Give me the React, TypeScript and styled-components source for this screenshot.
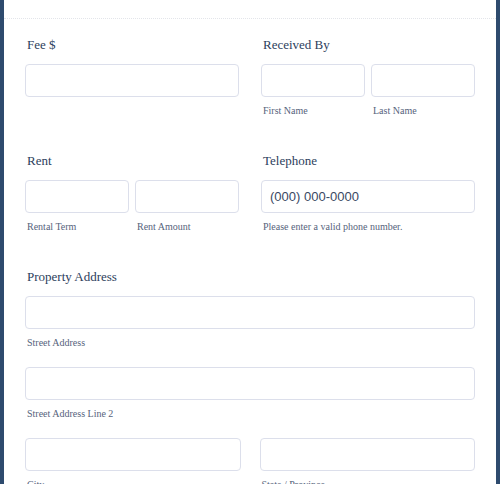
import React from "react";
import styled, { createGlobalStyle } from "styled-components";

const Global = createGlobalStyle`
  html, body { margin: 0; padding: 0; background: #2e4b6e; }
  body { font-family: "Liberation Serif", "Times New Roman", serif; }
  * { box-sizing: border-box; }
`;

const Page = styled.div`
  padding: 0 4px;
  height: 484px;
  overflow: hidden;
`;

const Card = styled.div`
  background: #ffffff;
  min-height: 520px;
`;

const Header = styled.div`
  height: 19px;
  border-bottom: 1px dotted #e3e5ea;
`;

const Body = styled.div`
  padding: 16px 21px 0 21px;
  display: flex;
  flex-direction: column;
  gap: 33px;
`;

const Row = styled.div<{ $gap?: number }>`
  display: grid;
  grid-template-columns: 1fr 1fr;
  column-gap: ${(p) => p.$gap ?? 22}px;
`;

const Field = styled.div`
  display: flex;
  flex-direction: column;
`;

const Label = styled.div`
  font-size: 13px;
  line-height: 20px;
  color: #2c3e5c;
  padding-left: 2px;
  margin-bottom: 9px;
`;

const Pair = styled.div`
  display: grid;
  grid-template-columns: 1fr 1fr;
  column-gap: 6px;
`;

const Box = styled.div`
  display: flex;
  flex-direction: column;
`;

const Input = styled.div`
  height: 33px;
  border: 1px solid #dcdfeb;
  border-radius: 4px;
  background: #fff;
  display: flex;
  align-items: center;
  padding-left: 8px;
  font-family: "Liberation Sans", Arial, sans-serif;
  font-size: 13px;
  color: #3a4963;
`;

const Sub = styled.div`
  margin-top: 7px;
  font-size: 10px;
  line-height: 14px;
  color: #56637c;
  padding-left: 2px;
  white-space: nowrap;
`;

const Stack = styled.div`
  display: flex;
  flex-direction: column;
  gap: 17px;
`;

export default function App() {
  return (
    <>
      <Global />
      <Page>
        <Card>
          <Header />
          <Body>
            <Row>
              <Field>
                <Label>Fee $</Label>
                <Input />
              </Field>
              <Field>
                <Label>Received By</Label>
                <Pair>
                  <Box>
                    <Input />
                    <Sub>First Name</Sub>
                  </Box>
                  <Box>
                    <Input />
                    <Sub>Last Name</Sub>
                  </Box>
                </Pair>
              </Field>
            </Row>
            <Row>
              <Field>
                <Label>Rent</Label>
                <Pair>
                  <Box>
                    <Input />
                    <Sub>Rental Term</Sub>
                  </Box>
                  <Box>
                    <Input />
                    <Sub>Rent Amount</Sub>
                  </Box>
                </Pair>
              </Field>
              <Field>
                <Label>Telephone</Label>
                <Box>
                  <Input>(000) 000-0000</Input>
                  <Sub>Please enter a valid phone number.</Sub>
                </Box>
              </Field>
            </Row>
            <Field>
              <Label>Property Address</Label>
              <Stack>
                <Box>
                  <Input />
                  <Sub>Street Address</Sub>
                </Box>
                <Box>
                  <Input />
                  <Sub>Street Address Line 2</Sub>
                </Box>
                <Row $gap={19}>
                  <Box>
                    <Input />
                    <Sub>City</Sub>
                  </Box>
                  <Box>
                    <Input />
                    <Sub>State / Province</Sub>
                  </Box>
                </Row>
              </Stack>
            </Field>
          </Body>
        </Card>
      </Page>
    </>
  );
}
